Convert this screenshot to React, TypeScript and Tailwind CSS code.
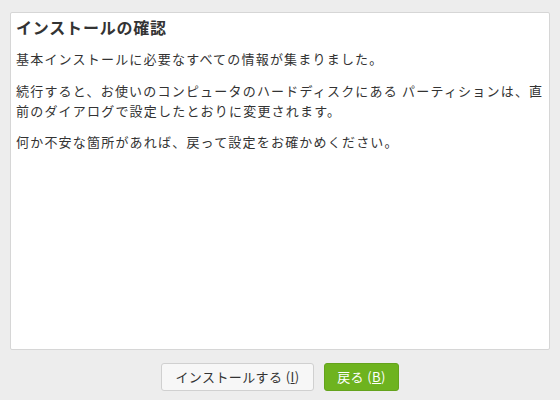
export default function App() {
  return (
    <div
      className="w-[560px] h-[400px] bg-[#ededed] flex flex-col text-[#333333]"
      style={{ fontFamily: '"Noto Sans CJK JP", "Noto Sans", sans-serif' }}
    >
      <div className="mx-[10px] mt-[12px] h-[338px] bg-white border border-[#d6d6d6] rounded-[2px] px-[5px] pt-[2px]">
        <h1 className="text-[16px] font-bold leading-[24px] tracking-[0.8px] text-[#333333]">インストールの確認</h1>
        <p className="mt-[10px] text-[13px] leading-[20px] tracking-[1.2px]">基本インストールに必要なすべての情報が集まりました。</p>
        <p className="mt-[12px] text-[13px] leading-[20px] tracking-[1.2px]">
          続行すると、お使いのコンピュータのハードディスクにある パーティションは、直前のダイアログで設定したとおりに変更されます。
        </p>
        <p className="mt-[11px] text-[13px] leading-[20px] tracking-[1.2px]">何か不安な箇所があれば、戻って設定をお確かめください。</p>
      </div>
      <div className="flex justify-center gap-[10px] mt-[13px]">
        <button className="w-[153px] h-[28px] bg-[#f7f7f7] border border-[#d0d0d0] rounded-[3px] text-[13px] tracking-[0.4px] text-[#333333]">
          インストールする (<span className="underline">I</span>)
        </button>
        <button className="w-[75px] h-[28px] bg-[#6eb31f] border border-[#64a31c] rounded-[3px] text-[13px] tracking-[0.4px] text-white">
          戻る (<span className="underline">B</span>)
        </button>
      </div>
    </div>
  );
}
